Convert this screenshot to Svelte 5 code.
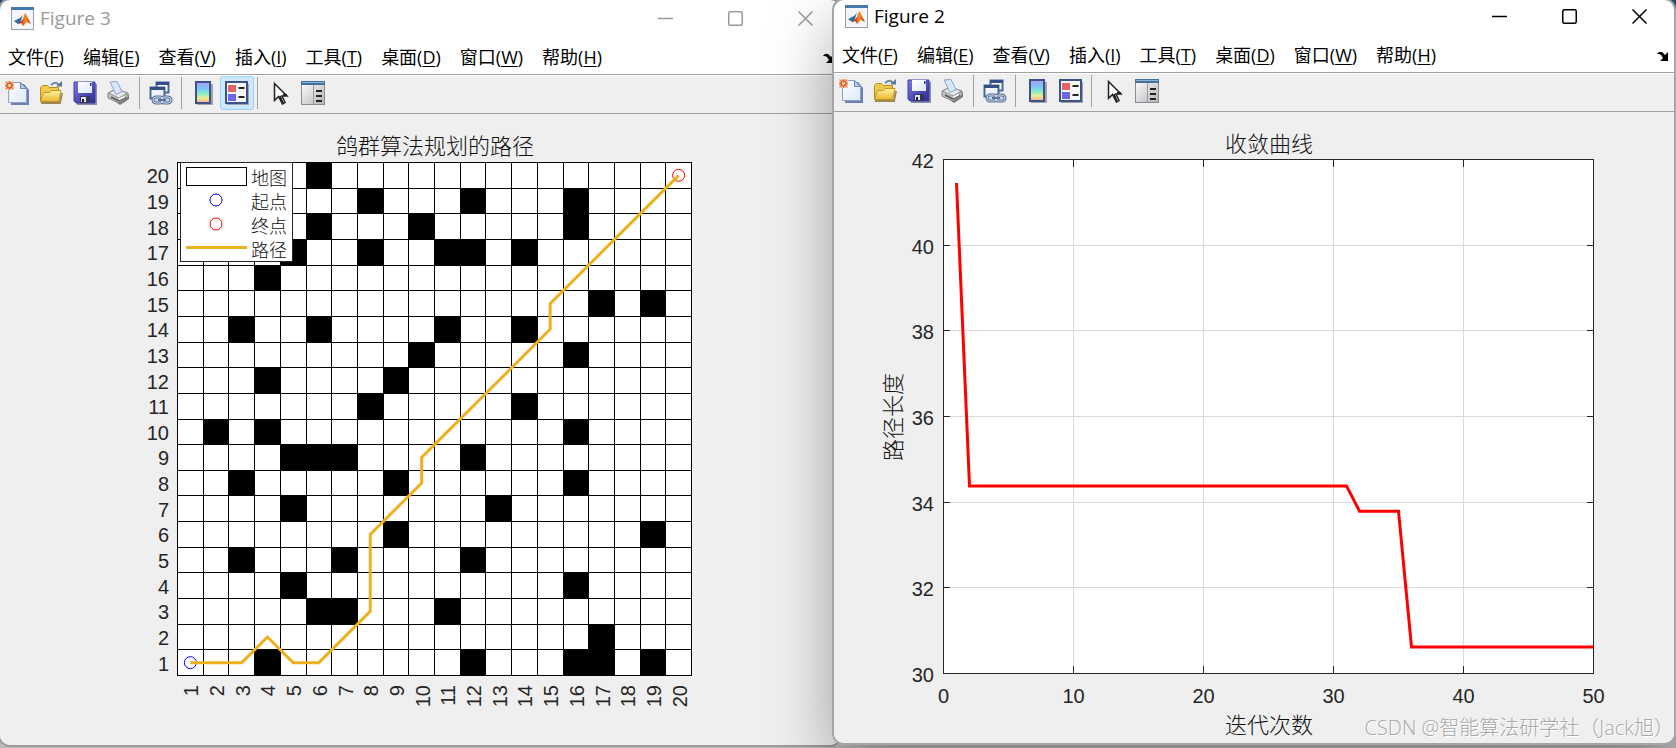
<script lang="ts">
  const menus = [
    ['文件', 'F'],
    ['编辑', 'E'],
    ['查看', 'V'],
    ['插入', 'I'],
    ['工具', 'T'],
    ['桌面', 'D'],
    ['窗口', 'W'],
    ['帮助', 'H'],
  ];

  const tools = ['new', 'open', 'save', 'print', '|', 'link', '|', 'colorbar', 'legend', '|', 'pointer', 'panel'];

  const figures = [
    { title: 'Figure 3', kind: 'map', active: false, pressed: 'legend' },
    { title: 'Figure 2', kind: 'curve', active: true, pressed: '' },
  ];

  // row number -> blocked columns
  const blocked: Record<number, number[]> = {
    20: [6],
    19: [8, 12, 16],
    18: [6, 10, 16],
    17: [5, 8, 11, 12, 14],
    16: [4],
    15: [17, 19],
    14: [3, 6, 11, 14],
    13: [10, 16],
    12: [4, 9],
    11: [8, 14],
    10: [2, 4, 16],
    9: [5, 6, 7, 12],
    8: [3, 9, 16],
    7: [5, 13],
    6: [9, 19],
    5: [3, 7, 12],
    4: [5, 16],
    3: [6, 7, 11],
    2: [17],
    1: [4, 12, 16, 17, 19],
  };
  const cells = Object.entries(blocked).flatMap(([row, cols]) => cols.map((col) => ({ row: Number(row), col })));
  const route = [[1, 1], [3, 1], [4, 2], [5, 1], [6, 1], [8, 3], [8, 6], [10, 8], [10, 9], [15, 14], [15, 15], [20, 20]];
  const numbers = Array.from({ length: 20 }, (_, i) => i + 1);
  const lines = Array.from({ length: 21 }, (_, i) => i);

  // edges of the map, in chart units
  const gx = (n: number) => Math.round(177 + n * 25.7);
  const gy = (n: number) => Math.round(561 - n * 25.65);
  const cx = (n: number) => 177.5 + (n - 0.5) * 25.7;
  const cy = (n: number) => 561.5 - (n - 0.5) * 25.65;
  const routePoints = route.map(([x, y]) => `${cx(x)},${cy(y)}`).join(' ');

  const best = [[1, 41.45], [2, 34.38], [31, 34.38], [32, 33.79], [35, 33.79], [36, 30.62], [50, 30.62]];
  const px = (v: number) => 109.5 + v * 13;
  const py = (v: number) => 561.5 - ((v - 30) / 12) * 514;
  const snap = (v: number) => Math.floor(v) + 0.5;
  const bestPoints = best.map(([x, y]) => `${px(x)},${py(y)}`).join(' ');
  const xTicks = [0, 10, 20, 30, 40, 50];
  const yTicks = [30, 32, 34, 36, 38, 40, 42];
</script>

<svelte:head>
  <title>Figures</title>
</svelte:head>

<!-- shared gradients -->
<svg class="defs" width="0" height="0" aria-hidden="true">
  <defs>
    <linearGradient id="bar" x1="0" y1="0" x2="0" y2="1">
      <stop offset="0" stop-color="#b49cf0" />
      <stop offset="0.3" stop-color="#7cc4f8" />
      <stop offset="0.55" stop-color="#86ecc8" />
      <stop offset="0.75" stop-color="#e8f090" />
      <stop offset="1" stop-color="#f8a890" />
    </linearGradient>
    <linearGradient id="paper" x1="0" y1="0" x2="1" y2="1">
      <stop offset="0" stop-color="#ffffff" />
      <stop offset="1" stop-color="#dce8fa" />
    </linearGradient>
    <linearGradient id="folder" x1="0" y1="0" x2="0" y2="1">
      <stop offset="0" stop-color="#fdf3a4" />
      <stop offset="1" stop-color="#e8b830" />
    </linearGradient>
    <linearGradient id="disk" x1="0" y1="0" x2="1" y2="1">
      <stop offset="0" stop-color="#7a78e0" />
      <stop offset="1" stop-color="#2c2a94" />
    </linearGradient>
    <linearGradient id="grey" x1="0" y1="0" x2="1" y2="1">
      <stop offset="0" stop-color="#ffffff" />
      <stop offset="1" stop-color="#b4b4b8" />
    </linearGradient>
    <linearGradient id="flame" x1="0" y1="0" x2="1" y2="0">
      <stop offset="0" stop-color="#7c1c10" />
      <stop offset="0.4" stop-color="#e8601c" />
      <stop offset="0.6" stop-color="#f89028" />
      <stop offset="1" stop-color="#b42c10" />
    </linearGradient>
  </defs>
</svg>

{#snippet icon(name: string)}
  <svg width="24" height="24" viewBox="0 0 24 24" aria-hidden="true">
    {#if name === 'new'}
      <path d="M6 3h13l5 6v15H6z" fill="#6f80ae" />
      <path d="M3.5 1.5h12l6 6v14h-18z" fill="url(#paper)" stroke="#8ba2cc" />
      <path d="M15.500 1.500v6h6z" fill="#b9cbea" stroke="#6f88bc" />
      <path d="M0 0h9v9H0z" fill="#f6c8a8" />
      <path d="M4.500 0v9M0 4.500h9M1 1l7 7M8 1l-7 7" stroke="#e0744c" />
      <circle cx="4.500" cy="4.500" r="2.500" fill="#ffd28c" stroke="#d85c30" stroke-width="1.500" />
    {:else if name === 'open'}
      <path d="M2 22h19l2-10" fill="none" stroke="#9c8a52" stroke-width="2" />
      <path d="M1.500 20.500V6.500l2-2h5l2 2h9v14z" fill="#efc84c" stroke="#bd8d1c" />
      <path d="M1.500 20.500l3-9h6l2-2h9.500l-2.500 11z" fill="url(#folder)" stroke="#c8981e" />
      <path d="M12 4c3-3 6-3 8 0" fill="none" stroke="#6d88a8" stroke-width="2" />
      <path d="M17 5.500h6V0z" fill="#5b7798" />
    {:else if name === 'save'}
      <path d="M3 3h21v21H4z" fill="#8c90a8" />
      <path d="M1 1h21v21H3l-2-2z" fill="url(#disk)" stroke="#403ea8" />
      <path d="M5 1h14v11H5z" fill="url(#paper)" />
      <path d="M17 2h1.500v3H17z" fill="#3a3898" />
      <path d="M7 15h10v7H7z" fill="#34345c" />
      <path d="M8 16h5v5H8z" fill="#e4e4ec" />
      <path d="M9 18h2v3H9z" fill="#222" />
    {:else if name === 'print'}
      <path d="M3 17l10 7 9-6v-4l-2-1z" fill="#77797c" />
      <path d="M1 12l8-4 12 4v4l-9 6-11-5z" fill="#c0c2c4" stroke="#828486" />
      <path d="M1.500 12l8-4 11 4-8.500 5z" fill="#e6e7e8" stroke="#929496" />
      <path d="M3 1l7-.5 5 10-6 3z" fill="#d7e7fb" stroke="#8da3c4" />
      <path d="M4 16l8 4 7-4" fill="none" stroke="#545658" stroke-width="1.500" />
      <path d="M12 18.500l6-3" stroke="#fafafa" stroke-width="1.500" />
      <circle cx="19" cy="13.500" r="1" fill="#6bb26c" />
    {:else if name === 'link'}
      <path d="M7.500 1.500h12v10h-12z" fill="#fff" stroke="#4d689c" stroke-width="2" />
      <path d="M7 1h13v3H7z" fill="#334f88" />
      <path d="M1.500 6.500h14v11h-14z" fill="url(#paper)" stroke="#4d689c" stroke-width="2" />
      <path d="M1 6h15v3H1z" fill="#334f88" />
      <rect x="4" y="16" width="10" height="6" rx="3" fill="#c8d8ec" stroke="#5c7398" stroke-width="3" />
      <rect x="12" y="16" width="10" height="6" rx="3" fill="#c8d8ec" stroke="#5c7398" stroke-width="3" />
      <rect x="4" y="16" width="10" height="6" rx="3" fill="none" stroke="#c8d8ec" />
      <rect x="12" y="16" width="10" height="6" rx="3" fill="none" stroke="#c8d8ec" />
      <path d="M9 19h8" stroke="#5c7398" stroke-width="2" />
    {:else if name === 'colorbar'}
      <path d="M6 3h16v21H6z" fill="#a0a4ac" />
      <rect x="5" y="1" width="14" height="21" fill="url(#bar)" stroke="#3c5288" stroke-width="2" />
    {:else if name === 'legend'}
      <path d="M2 3h22v21H2z" fill="#a0a4ac" />
      <rect x="1" y="1" width="21" height="21" fill="#f6f8fc" stroke="#3c5288" stroke-width="2" />
      <path d="M3 4h8v7H3z" fill="#e46464" />
      <path d="M3 13h8v7H3z" fill="#6a68e4" />
      <path d="M13.500 7h6M13.500 16h6" stroke="#222" stroke-width="2" />
    {:else if name === 'pointer'}
      <path d="M7.500 2.500v17l4-4 4 7.500 2.500-1.500-3-6.500h5z" fill="#fff" stroke="#222" stroke-width="1.500" />
      <path d="M13 15l3 8M16 14h4" stroke="#222" stroke-width="2" />
    {:else}
      <rect x="0.500" y="0.500" width="23" height="23" fill="url(#grey)" stroke="#8a8c90" />
      <path d="M0 0h24v4H0z" fill="#44709c" />
      <path d="M1 1h22v1H1z" fill="#8db4d4" />
      <path d="M12.500 4v19" stroke="#9a9ca0" />
      <path d="M15 10h6M15 15h6M15 20h6" stroke="#222" stroke-width="2" />
    {/if}
  </svg>
{/snippet}

{#snippet mapChart()}
  <svg class="chart" viewBox="0 0 840 631" role="img" aria-label="鸽群算法规划的路径">
    <text class="cjk" x="435" y="40" text-anchor="middle">鸽群算法规划的路径</text>
    <rect x="177" y="48" width="514" height="513" fill="#fff" />
    <g shape-rendering="crispEdges">
      {#each cells as c}
        <rect x={gx(c.col - 1)} y={gy(c.row)} width={gx(c.col) - gx(c.col - 1) + 1} height={gy(c.row - 1) - gy(c.row) + 1} />
      {/each}
      {#each lines as n}
        <path d="M{gx(n) + 0.5} 48V562M177 {gy(n) + 0.5}H692" stroke="#000" />
      {/each}
    </g>
    {#each numbers as n}
      <text x="169" y={cy(n) + 8} text-anchor="end">{n}</text>
      <text transform="translate({cx(n) + 8} 571) rotate(-90)" text-anchor="end">{n}</text>
    {/each}
    <circle cx={cx(1)} cy={cy(1)} r="6" fill="none" stroke="#00f" />
    <circle cx={cx(20)} cy={cy(20)} r="6" fill="none" stroke="#f00" />
    <polyline points={routePoints} fill="none" stroke="#edb120" stroke-width="3" />

    <rect x="180.5" y="48.5" width="112" height="99" fill="#fff" stroke="#262626" />
    <rect x="186.5" y="53.5" width="60" height="18" fill="#fff" stroke="#000" />
    <circle cx="216" cy="86" r="6" fill="none" stroke="#00f" />
    <circle cx="216" cy="110" r="6" fill="none" stroke="#f00" />
    <path d="M186 133.500h61" stroke="#edb120" stroke-width="3" />
    <g class="key">
      <text x="251" y="71">地图</text>
      <text x="251" y="95">起点</text>
      <text x="251" y="119">终点</text>
      <text x="251" y="143">路径</text>
    </g>
  </svg>
{/snippet}

{#snippet curveChart()}
  <svg class="chart" viewBox="0 0 840 631" role="img" aria-label="收敛曲线">
    <text class="cjk" x="435" y="40" text-anchor="middle">收敛曲线</text>
    <rect x="109.5" y="47.5" width="650" height="514" fill="#fff" />
    {#each xTicks as t}
      <path d="M{px(t)} 48V561" stroke="#dadada" />
      <path d="M{px(t)} 48v7M{px(t)} 561v-7" stroke="#262626" />
      <text x={px(t)} y="591" text-anchor="middle">{t}</text>
    {/each}
    {#each yTicks as t}
      <path d="M110 {snap(py(t))}H759" stroke="#dadada" />
      <path d="M110 {snap(py(t))}h6M759 {snap(py(t))}h-6" stroke="#262626" />
      <text x="100" y={snap(py(t)) + 8} text-anchor="end">{t}</text>
    {/each}
    <rect x="109.5" y="47.5" width="650" height="514" fill="none" stroke="#262626" />
    <polyline points={bestPoints} fill="none" stroke="#f00" stroke-width="3" />
    <text class="cjk" x="435" y="621" text-anchor="middle">迭代次数</text>
    <text class="cjk" transform="translate(67 305) rotate(-90)" text-anchor="middle">路径长度</text>
  </svg>
{/snippet}

<main class="desktop">
  {#each figures as fig}
    <section class="window" class:active={fig.active}>
      <header>
        <svg width="23" height="23" viewBox="0 0 23 23" aria-hidden="true">
          <rect x="0.500" y="0.500" width="22" height="22" fill="#f4f5f8" stroke="#9a9ea6" />
          <path d="M0 0h23v3H0z" fill="#4479ac" />
          <path d="M3 14l6-3 3-3-3 8-2 1z" fill="#2c6ca8" />
          <path d="M7 17l5-5 2-6 1 1 5 10-4-2-4 4-2-3z" fill="url(#flame)" />
        </svg>
        <h1>{fig.title}</h1>
        <div class="controls">
          <button aria-label="最小化"><svg width="15" height="15"><path d="M0 7.500h15" /></svg></button>
          <button aria-label="最大化"><svg width="15" height="15"><rect x="0.750" y="0.750" width="13.500" height="13.500" rx="1.500" /></svg></button>
          <button aria-label="关闭"><svg width="15" height="15"><path d="M.5.5l14 14M14.500.5l-14 14" /></svg></button>
        </div>
      </header>

      <nav>
        {#each menus as [label, key]}
          <button>{label}(<u>{key}</u>)</button>
        {/each}
        <button class="dock" aria-label="停靠">
          <svg width="12" height="10" viewBox="0 0 12 10"><path d="M0 3c2-3 5-3 7 0l1 1 3-3v9H3l3-3-2-3C3 3 2 3 0 3z" /></svg>
        </button>
      </nav>

      <div class="toolbar">
        {#each tools as tool}
          {#if tool === '|'}
            <span class="sep"></span>
          {:else}
            <button class:pressed={fig.pressed === tool} aria-label={tool}>{@render icon(tool)}</button>
          {/if}
        {/each}
      </div>

      {#if fig.kind === 'map'}
        {@render mapChart()}
      {:else}
        {@render curveChart()}
      {/if}
    </section>
  {/each}
  <p class="watermark">CSDN @智能算法研学社（Jack旭）</p>
</main>

<style>
  :global(body) {
    margin: 0;
  }
  .defs {
    position: absolute;
  }
  .desktop {
    position: relative;
    display: grid;
    grid-template-columns: 834fr 842fr;
    align-items: start;
    min-height: 100vh;
    overflow: hidden;
    background: linear-gradient(#1d4a78 12px, #bcbcbc 12px);
    font-family: "Open Sans", "Noto Sans CJK SC", sans-serif;
    font-size: 18px;
  }
  .window {
    margin-right: -6px;
    padding-top: 2px;
    overflow: hidden;
    border-radius: 10px;
    background: #fff;
    box-shadow: 0 0 0 2px #9b9b9b;
    color: #999;
  }
  .window.active {
    position: relative;
    margin-right: 2px;
    padding-top: 0;
    box-shadow: 0 0 0 2px #a5a5a5, 0 24px 64px rgba(0, 0, 0, 0.36);
    color: #000;
  }
  button {
    padding: 0;
    border: 0;
    background: none;
    color: inherit;
    font: inherit;
  }
  header {
    display: flex;
    align-items: center;
    height: 32px;
    padding-left: 11px;
  }
  h1 {
    margin: 0 0 0 6px;
    font-size: 19px;
    font-weight: 400;
    line-height: 24px;
  }
  .controls {
    display: flex;
    margin-left: auto;
  }
  .controls button {
    display: flex;
    align-items: center;
    justify-content: center;
    width: 70px;
    height: 32px;
  }
  .controls svg {
    fill: none;
    stroke: currentColor;
    stroke-width: 1.5;
  }
  nav {
    display: flex;
    align-items: center;
    gap: 19px;
    height: 34px;
    padding: 6px 5px 0 8px;
    border-bottom: 1px solid #a0a0a0;
    color: #000;
    line-height: 24px;
  }
  nav button {
    white-space: nowrap;
  }
  u {
    text-decoration-thickness: 1px;
    text-underline-offset: 2px;
  }
  .dock {
    margin-left: auto;
    line-height: 10px;
  }
  .toolbar {
    display: flex;
    align-items: center;
    height: 36px;
    padding-bottom: 2px;
    border-bottom: 1px solid #a0a0a0;
    background: #efefef;
    box-shadow: inset 0 1px #fff;
  }
  .toolbar button {
    box-sizing: border-box;
    display: flex;
    align-items: center;
    justify-content: center;
    width: 34px;
    height: 34px;
    border: 1px solid transparent;
    border-radius: 3px;
  }
  .toolbar .pressed {
    border-color: #99d1ff;
    background: #cce8ff;
  }
  .sep {
    width: 1px;
    height: 32px;
    margin: 0 4px 0 3px;
    background: #a0a0a0;
  }
  .chart {
    display: block;
    width: 100%;
    background: #efefef;
    fill: #000;
  }
  .chart text {
    fill: #262626;
    font-family: "Liberation Sans", Arial, sans-serif;
    font-size: 20px;
  }
  .chart .cjk,
  .chart .key text {
    fill: #111;
    font-family: "Noto Sans CJK SC", sans-serif;
    font-size: 22px;
    font-weight: 300;
  }
  .chart .key text {
    font-size: 18px;
  }
  .watermark {
    position: absolute;
    right: 2px;
    bottom: 6px;
    margin: 0;
    color: #a8a8a8;
    font-size: 20px;
    font-weight: 300;
    line-height: 28px;
    text-shadow: 1px 1px #fff;
  }
</style>
